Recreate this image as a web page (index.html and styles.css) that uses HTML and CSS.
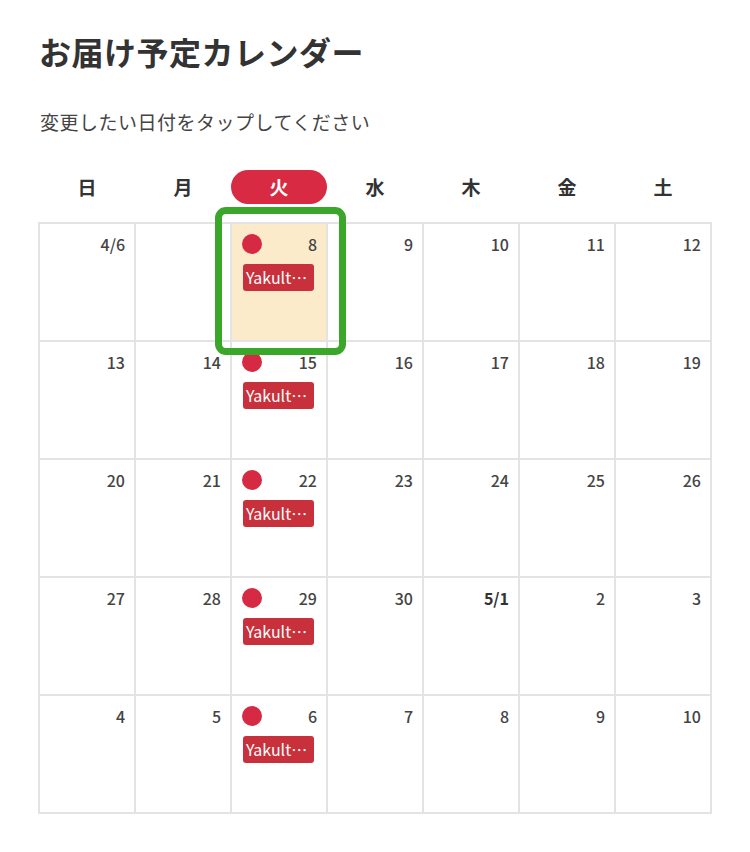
FILE: index.html
```html
<!DOCTYPE html>
<html lang="ja">
<head>
<meta charset="utf-8">
<link rel="stylesheet" href="styles.css">
</head>
<body>
<div class="page">
  <h1 class="title">お届け予定カレンダー</h1>
  <p class="sub">変更したい日付をタップしてください</p>
  <div class="week">
    <div class="wd">日</div><div class="wd">月</div><div class="wd active">火</div><div class="wd">水</div><div class="wd">木</div><div class="wd">金</div><div class="wd">土</div>
  </div>
  <div class="cal">
    <div class="cell"><div class="top"><span class="num">4/6</span></div></div>
    <div class="cell"><div class="top"><span class="num"></span></div></div>
    <div class="cell sel"><div class="top"><span class="dot"></span><span class="num">8</span></div><div class="tag">Yakult…</div><div class="ring"></div></div>
    <div class="cell"><div class="top"><span class="num">9</span></div></div>
    <div class="cell"><div class="top"><span class="num">10</span></div></div>
    <div class="cell"><div class="top"><span class="num">11</span></div></div>
    <div class="cell"><div class="top"><span class="num">12</span></div></div>

    <div class="cell"><div class="top"><span class="num">13</span></div></div>
    <div class="cell"><div class="top"><span class="num">14</span></div></div>
    <div class="cell"><div class="top"><span class="dot"></span><span class="num">15</span></div><div class="tag">Yakult…</div></div>
    <div class="cell"><div class="top"><span class="num">16</span></div></div>
    <div class="cell"><div class="top"><span class="num">17</span></div></div>
    <div class="cell"><div class="top"><span class="num">18</span></div></div>
    <div class="cell"><div class="top"><span class="num">19</span></div></div>

    <div class="cell"><div class="top"><span class="num">20</span></div></div>
    <div class="cell"><div class="top"><span class="num">21</span></div></div>
    <div class="cell"><div class="top"><span class="dot"></span><span class="num">22</span></div><div class="tag">Yakult…</div></div>
    <div class="cell"><div class="top"><span class="num">23</span></div></div>
    <div class="cell"><div class="top"><span class="num">24</span></div></div>
    <div class="cell"><div class="top"><span class="num">25</span></div></div>
    <div class="cell"><div class="top"><span class="num">26</span></div></div>

    <div class="cell"><div class="top"><span class="num">27</span></div></div>
    <div class="cell"><div class="top"><span class="num">28</span></div></div>
    <div class="cell"><div class="top"><span class="dot"></span><span class="num">29</span></div><div class="tag">Yakult…</div></div>
    <div class="cell"><div class="top"><span class="num">30</span></div></div>
    <div class="cell"><div class="top"><span class="num bold">5/1</span></div></div>
    <div class="cell"><div class="top"><span class="num">2</span></div></div>
    <div class="cell"><div class="top"><span class="num">3</span></div></div>

    <div class="cell"><div class="top"><span class="num">4</span></div></div>
    <div class="cell"><div class="top"><span class="num">5</span></div></div>
    <div class="cell"><div class="top"><span class="dot"></span><span class="num">6</span></div><div class="tag">Yakult…</div></div>
    <div class="cell"><div class="top"><span class="num">7</span></div></div>
    <div class="cell"><div class="top"><span class="num">8</span></div></div>
    <div class="cell"><div class="top"><span class="num">9</span></div></div>
    <div class="cell"><div class="top"><span class="num">10</span></div></div>
  </div>
</div>
</body>
</html>
```

FILE: styles.css
```css
* { box-sizing: border-box; }
html, body { margin: 0; padding: 0; background: #ffffff; }
body {
  font-family: "Noto Sans CJK JP", "Noto Sans", sans-serif;
  color: #333333;
}
.page {
  padding: 31px 0 0 38px;
}
.title {
  margin: 0 0 0 1px;
  font-size: 32px;
  line-height: 40px;
  font-weight: 700;
  letter-spacing: 0.5px;
  color: #333333;
}
.sub {
  margin: 39px 0 0 2px;
  font-size: 19px;
  line-height: 24px;
  letter-spacing: 0.5px;
  color: #444444;
}
.week {
  margin-top: 36px;
  display: grid;
  grid-template-columns: repeat(7, 96px);
  padding-left: 1px;
}
.wd {
  height: 34px;
  line-height: 34px;
  text-align: center;
  font-size: 19px;
  font-weight: 700;
  color: #333333;
}
.wd.active {
  background: #d82a42;
  color: #ffffff;
  border-radius: 17px;
}
.cal {
  margin-top: 18px;
  display: grid;
  grid-template-columns: repeat(7, 96px);
  grid-auto-rows: 118px;
  width: 674px;
  border-top: 2px solid #e3e3e3;
  border-left: 2px solid #e3e3e3;
}
.cell {
  position: relative;
  border-right: 2px solid #e3e3e3;
  border-bottom: 2px solid #e3e3e3;
  padding: 9px 9px 0 10px;
}
.cell.sel { background: #fcebcb; }
.top {
  display: flex;
  justify-content: space-between;
  align-items: center;
  height: 22px;
}
.num {
  margin-left: auto;
  font-size: 16px;
  line-height: 22px;
  color: #444444;
  font-weight: 500;
}
.num.bold { font-weight: 700; color: #333333; }
.dot {
  width: 20px;
  height: 20px;
  border-radius: 50%;
  background: #d62a44;
  flex: none;
}
.tag {
  margin-top: 9px;
  margin-left: 1px;
  width: 71px;
  height: 27px;
  line-height: 27px;
  padding-left: 3px;
  background: #c8313b;
  color: #ffffff;
  border-radius: 3px;
  font-size: 16px;
  white-space: nowrap;
  overflow: hidden;
}
.ring {
  position: absolute;
  left: -17px;
  right: -20px;
  top: -17px;
  bottom: -15px;
  border: 7px solid #3aa62a;
  border-radius: 11px;
  z-index: 2;
}
```
